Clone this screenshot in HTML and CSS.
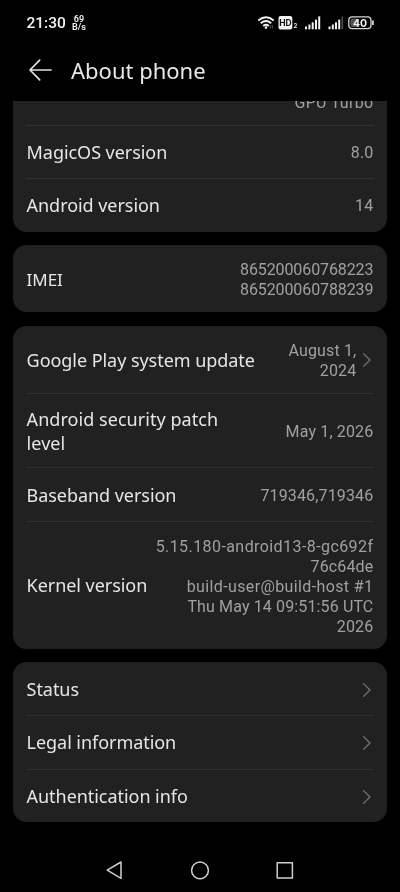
FILE: index.html
```html
<!DOCTYPE html>
<html lang="en">
<head>
<meta charset="utf-8">
<meta name="viewport" content="width=device-width">
<title>About phone</title>
<link rel="stylesheet" href="styles.css">
</head>
<body>
<div class="phone">
  <header class="status-bar">
    <div class="clock">21:30</div>
    <div class="speed"><span>69</span><span>B/s</span></div>
    <svg class="status-icons" width="120" height="18" viewBox="256 14 120 18">
      <g fill="none" stroke="#f2f2f2" stroke-width="1.9">
        <path d="M258.3 20.4Q266 14 273.7 20.4"/>
        <path d="M260.8 23.2Q266 18.9 271.2 23.2"/>
        <path d="M263.2 25.9Q266 23.6 268.8 25.9"/>
      </g>
      <circle cx="266" cy="27.6" r="1.3" fill="#f2f2f2"/>
      <path d="M270.3 25v3.5M272.3 25v3.5" stroke="#555" stroke-width="1"/>
      <rect x="278.5" y="16" width="13.8" height="13.4" rx="2" fill="#f2f2f2"/>
      <text class="hd" x="285.4" y="26" text-anchor="middle">HD</text>
      <text class="sim" x="293.6" y="28">2</text>
      <g fill="#f2f2f2">
        <rect x="305" y="26.5" width="2" height="2.8"/><rect x="308.4" y="24.5" width="2" height="4.8"/><rect x="311.7" y="22.3" width="2" height="7"/><rect x="315" y="19.6" width="2" height="9.7"/><rect x="318.2" y="16.4" width="2" height="12.9"/>
        <rect x="328.5" y="26.5" width="2" height="2.8"/><rect x="331.8" y="24.5" width="2" height="4.8"/><rect x="335" y="22.3" width="2" height="7"/><rect x="338.2" y="19.6" width="2" height="9.7"/>
      </g>
      <rect x="341.4" y="16.4" width="1.8" height="12.9" fill="#484848"/>
      <rect x="348.8" y="16.8" width="22.2" height="11.8" rx="3.4" fill="none" stroke="#d8d8d8" stroke-width="1.3"/>
      <rect x="350.4" y="18.4" width="7.6" height="8.6" rx="2" fill="#555"/>
      <path d="M372.9 20.5v4.4" stroke="#d8d8d8" stroke-width="1.7"/>
      <text class="battery" x="360" y="26.6" text-anchor="middle">40</text>
    </svg>
  </header>
  <div class="title-bar">
    <svg width="24" height="24" viewBox="28 58 24 24" fill="none" stroke="#e4e4e4" stroke-width="1.7" stroke-linecap="round" stroke-linejoin="round"><path d="M51 70H30.3M39.7 60.2L30 70L39.7 79.8"/></svg>
    <h1>About phone</h1>
  </div>
  <main>
    <section class="card card-scrolled">
      <div class="row row-cut"><span class="value">GPU Turbo</span></div>
      <div class="row"><span class="label">MagicOS version</span><span class="value">8.0</span></div>
      <div class="row"><span class="label">Android version</span><span class="value">14</span></div>
    </section>
    <section class="card">
      <div class="row row-imei"><span class="label imei">IMEI</span><span class="value digits">865200060768223<br>865200060788239</span></div>
    </section>
    <section class="card">
      <div class="row row-play"><span class="label">Google Play system update</span><span class="value">August 1,<br>2024</span><svg class="chevron" width="10" height="16" viewBox="0 0 10 16"><path d="M1.5 1.6L8 8L1.5 14.4"/></svg></div>
      <div class="row row-patch"><span class="label patch">Android security patch<br>level</span><span class="value">May 1, 2026</span></div>
      <div class="row row-lower"><span class="label">Baseband version</span><span class="value">719346,719346</span></div>
      <div class="row row-kernel row-lower"><span class="label">Kernel version</span><span class="value"><span class="loose">5.15.180-android13-8-gc692f</span><br>76c64de<br><span class="build">build-user@build-host #1</span><br><span class="time">Thu May 14 09:51:56 UTC</span><br>2026</span></div>
    </section>
    <section class="card">
      <div class="row"><span class="label">Status</span><svg class="chevron" width="10" height="16" viewBox="0 0 10 16"><path d="M1.5 1.6L8 8L1.5 14.4"/></svg></div>
      <div class="row"><span class="label">Legal information</span><svg class="chevron" width="10" height="16" viewBox="0 0 10 16"><path d="M1.5 1.6L8 8L1.5 14.4"/></svg></div>
      <div class="row row-lower"><span class="label">Authentication info</span><svg class="chevron" width="10" height="16" viewBox="0 0 10 16"><path d="M1.5 1.6L8 8L1.5 14.4"/></svg></div>
    </section>
  </main>
  <nav class="nav-bar">
    <svg width="20" height="20" viewBox="0 0 20 20"><path d="M16 2L2.2 10.2L16 18.4Z"/></svg>
    <svg width="20" height="20" viewBox="0 0 20 20"><circle cx="10" cy="10.4" r="8.4"/></svg>
    <svg width="20" height="20" viewBox="0 0 20 20"><rect x="2.2" y="2.8" width="15.2" height="15.2"/></svg>
  </nav>
</div>
</body>
</html>
```
FILE: styles.css
```css
* { box-sizing: border-box; }
body { margin: 0; background: #000; font-family: "Noto Sans", sans-serif; }
.phone { width: 400px; height: 892px; overflow: hidden; display: flex; flex-direction: column; will-change: transform; }
.status-bar { height: 42px; display: flex; align-items: flex-start; padding: 14px 24px 0 26.5px; color: #f2f2f2; }
.clock { font: 500 15.5px/18px Roboto, sans-serif; width: 45.5px; white-space: nowrap; }
.speed { display: flex; flex-direction: column; font: 600 9px/8px Roboto, sans-serif; text-align: center; padding-top: 1px; }
.status-icons { margin-left: auto; }
.status-icons text { font-family: Inter, sans-serif; font-weight: 700; }
.hd { font-size: 8.5px; fill: #111; }
.sim { font-size: 6px; fill: #ddd; }
.battery { font-size: 10.5px; fill: #f2f2f2; }
.title-bar { height: 59px; display: flex; align-items: center; gap: 19px; padding: 0 28px 4px; }
h1 { margin: 0; font-size: 22px; line-height: 30px; font-weight: 400; color: #e8e8e8; }
main { display: flex; flex-direction: column; gap: 13.3px; padding: 0 13.3px; }
.card { background: #212122; border-radius: 13.5px; overflow: hidden; }
.card-scrolled { border-top-left-radius: 0; border-top-right-radius: 0; }
.row { position: relative; height: 53.3px; display: flex; align-items: center; padding: 1.6px 13.3px 0; }
.row + .row::before { content: ""; position: absolute; top: 0; left: 13px; right: 13px; height: 1px; background: #303031; }
.row-cut { height: 24px; align-items: flex-end; }
.row-imei { height: 67.5px; }
.row-play { height: 67.5px; }
.row-patch { height: 74.3px; }
.row-kernel { height: 128px; }
.row-lower { padding-top: 2.8px; }
.label { font-size: 18px; line-height: 23.4px; letter-spacing: -0.05px; color: #e6e6e6; white-space: nowrap; }
.label.imei { font-size: 17px; }
.label.patch { letter-spacing: 0.05px; padding-top: 1px; }
.value { margin-left: auto; padding-top: 1px; font: 400 16px/20px Roboto, sans-serif; letter-spacing: 0.15px; color: #a0a0a1; text-align: right; white-space: nowrap; }
.value.digits { letter-spacing: -0.1px; }
.loose { letter-spacing: 0.42px; }
.build { letter-spacing: 0.38px; }
.time { letter-spacing: 0.13px; }
.row-cut .value { margin-bottom: 12px; letter-spacing: 0.3px; }
.chevron { margin: 0 1px 0 auto; fill: none; stroke: #747475; stroke-width: 1.3; stroke-linecap: round; stroke-linejoin: round; }
.value + .chevron { margin-left: 6px; }
.nav-bar { display: flex; gap: 65px; justify-content: center; margin-top: 38.3px; }
.nav-bar svg { fill: none; stroke: #cfcfcf; stroke-width: 1.5; stroke-linejoin: round; }
```
